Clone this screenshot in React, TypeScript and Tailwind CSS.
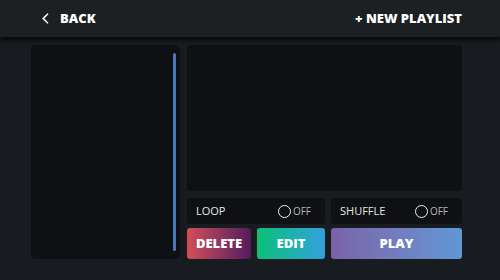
const font = { fontFamily: '"Open Sans", "Noto Sans", sans-serif' };

type ToggleProps = { label: string };

const ToggleRow: React.FC<ToggleProps> = ({ label }) => (
  <div className="flex h-[26px] items-center justify-between rounded-[3px] bg-[#0e1013] pl-[9px] pr-[14px]">
    <span className="text-[11px] text-[#e6e6e6]">{label}</span>
    <span className="flex items-center gap-[2px]">
      <span className="block h-[13px] w-[13px] rounded-full border-[1.5px] border-[#f0f0f0]" />
      <span className="text-[10px] text-[#b5b5b5]">OFF</span>
    </span>
  </div>
);

export default function App() {
  return (
    <div
      className="flex h-[280px] w-[500px] flex-col bg-[#181b1f] text-white"
      style={font}
    >
      <header className="relative z-10 flex h-[37px] shrink-0 items-center justify-between bg-[#1d2023] pl-[42px] pr-[38px] shadow-[0_3px_4px_rgba(0,0,0,0.7)]">
        <button className="flex items-center gap-[11px] text-[13px] font-extrabold">
          <svg width="7" height="11" viewBox="0 0 7 11" fill="none">
            <path d="M6 0.8 L1.2 5.5 L6 10.2" stroke="white" strokeWidth="1.6" />
          </svg>
          BACK
        </button>
        <button className="text-[13px] font-extrabold">+ NEW PLAYLIST</button>
      </header>
      <main className="flex flex-1 gap-[7px] pb-[21px] pl-[31px] pr-[38px] pt-[8px]">
        <section className="relative flex w-[149px] justify-end rounded-[5px] bg-[#0e1013] pb-[8px] pr-[4px] pt-[8px]">
          <div className="w-[3px] rounded-sm bg-[#4a78b5]" />
        </section>
        <section className="flex flex-1 flex-col">
          <div className="flex-1 rounded-[4px] bg-[#0e1013]" />
          <div className="mt-[7px] grid grid-cols-[138px_1fr] gap-[6px]">
            <ToggleRow label="LOOP" />
            <ToggleRow label="SHUFFLE" />
          </div>
          <div className="mt-[4px] grid h-[31px] grid-cols-[64px_68px_1fr] gap-[6px] text-[13px] font-extrabold">
            <button className="rounded-[3px] bg-gradient-to-r from-[#d34e56] to-[#561a5c]">
              DELETE
            </button>
            <button className="rounded-[3px] bg-gradient-to-r from-[#0dbf73] to-[#32a0db]">
              EDIT
            </button>
            <button className="rounded-[3px] bg-gradient-to-r from-[#7a62a8] to-[#5f98d4]">
              PLAY
            </button>
          </div>
        </section>
      </main>
    </div>
  );
}
